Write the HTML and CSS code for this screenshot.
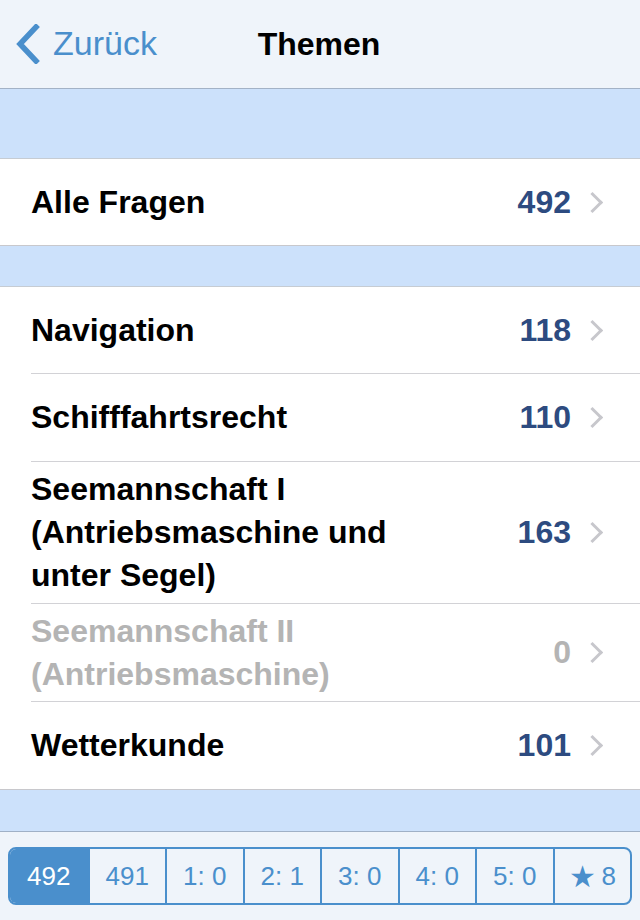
FILE: index.html
```html
<!DOCTYPE html>
<html lang="de">
<head>
    <meta charset="UTF-8">
    <meta name="viewport" content="width=device-width, initial-scale=1.0">
    <title>Themen</title>
    <link rel="stylesheet" href="styles.css">
</head>
<body>
    <div class="screen">
        <!-- Navigation bar -->
        <div class="navbar">
            <a class="back" href="#">
                <svg class="back-icon" width="26" height="40" viewBox="0 0 26 40">
                    <path d="M22 3 L6 20 L22 37" fill="none" stroke="#4a8fcc" stroke-width="5.5" stroke-linecap="square"/>
                </svg>
                <span>Zurück</span>
            </a>
            <h1 class="title">Themen</h1>
        </div>

        <div class="spacer spacer-top"></div>

        <div class="group">
            <div class="row row-single">
                <div class="row-inner last">
                    <span class="label">Alle Fragen</span>
                    <span class="count">492</span>
                    <span class="chevron"></span>
                </div>
            </div>
        </div>

        <div class="spacer"></div>

        <div class="group">
            <div class="row h86">
                <div class="row-inner">
                    <span class="label">Navigation</span>
                    <span class="count">118</span>
                    <span class="chevron"></span>
                </div>
            </div>
            <div class="row h87">
                <div class="row-inner">
                    <span class="label">Schifffahrtsrecht</span>
                    <span class="count">110</span>
                    <span class="chevron"></span>
                </div>
            </div>
            <div class="row h141">
                <div class="row-inner">
                    <span class="label">Seemannschaft I<br>(Antriebsmaschine und<br>unter Segel)</span>
                    <span class="count">163</span>
                    <span class="chevron"></span>
                </div>
            </div>
            <div class="row h97 disabled">
                <div class="row-inner">
                    <span class="label">Seemannschaft II<br>(Antriebsmaschine)</span>
                    <span class="count">0</span>
                    <span class="chevron"></span>
                </div>
            </div>
            <div class="row row-last">
                <div class="row-inner last">
                    <span class="label">Wetterkunde</span>
                    <span class="count">101</span>
                    <span class="chevron"></span>
                </div>
            </div>
        </div>

        <div class="spacer spacer-bottom"></div>

        <!-- Toolbar with filter segments -->
        <div class="toolbar">
            <div class="segments">
                <div class="segment active">492</div>
                <div class="segment">491</div>
                <div class="segment">1: 0</div>
                <div class="segment">2: 1</div>
                <div class="segment">3: 0</div>
                <div class="segment">4: 0</div>
                <div class="segment">5: 0</div>
                <div class="segment"><span class="star">★</span> 8</div>
            </div>
        </div>
    </div>
</body>
</html>
```

FILE: styles.css
```css
body {
    margin: 0;
    padding: 0;
    font-family: "Liberation Sans", Arial, sans-serif;
    background-color: #cce1fb;
}
.screen {
    width: 640px;
    height: 920px;
    display: flex;
    flex-direction: column;
    overflow: hidden;
}
.navbar {
    height: 88px;
    flex: none;
    background-color: #eff4fa;
    border-bottom: 1px solid #a3b2c6;
    position: relative;
    display: flex;
    align-items: center;
    justify-content: center;
}
.back {
    position: absolute;
    left: 14px;
    top: 24px;
    display: flex;
    align-items: center;
    gap: 13px;
    color: #4a8fcc;
    text-decoration: none;
    font-size: 34px;
}
.back span {
    margin-top: -1px;
}
.title {
    margin: 0 0 0 -2px;
    font-size: 32px;
    font-weight: bold;
    color: #000;
}
.spacer {
    height: 40px;
    flex: none;
    background-color: #cce1fb;
    border-bottom: 1px solid #c6ccd3;
}
.spacer-top {
    height: 69px;
}
.spacer-bottom {
    height: 41px;
    border-bottom-color: #9fb0c6;
}
.group {
    background-color: #fff;
    border-bottom: 1px solid #c8c8cc;
}
.row {
    display: flex;
}
.row-single { height: 86px; }
.h86 { height: 87px; }
.h87 { height: 88px; }
.h141 { height: 142px; }
.h97 { height: 98px; }
.row-last { height: 87px; }
.row-inner {
    flex: 1;
    margin-left: 31px;
    display: flex;
    align-items: center;
    border-bottom: 1px solid #d2d2d6;
}
.row-inner.last {
    border-bottom: none;
}
.label {
    flex: 1;
    font-size: 32px;
    font-weight: bold;
    line-height: 43px;
    color: #000;
}
.count {
    font-size: 32px;
    font-weight: bold;
    color: #2d4b80;
    margin-right: 20px;
}
.chevron {
    width: 12px;
    height: 12px;
    border-top: 3px solid #c7c7cc;
    border-right: 3px solid #c7c7cc;
    transform: rotate(45deg);
    margin-right: 40px;
    margin-left: -6px;
}
.disabled .label,
.disabled .count {
    color: #b4b4b4;
}
.toolbar {
    flex: 1;
    background-color: #eff4fa;
    padding: 15px 8px 0 8px;
}
.segments {
    display: grid;
    grid-template-columns: repeat(8, 1fr);
    height: 58px;
    border: 2px solid #4a8fcc;
    border-radius: 8px;
    overflow: hidden;
    box-sizing: border-box;
}
.segment {
    display: flex;
    align-items: center;
    justify-content: center;
    font-size: 26px;
    color: #4a8fcc;
    border-left: 2px solid #4a8fcc;
}
.segment:first-child {
    border-left: none;
}
.segment.active {
    background-color: #4a8fcc;
    color: #fff;
}
.star {
    margin-right: 6px;
    font-size: 30px;
}
```
